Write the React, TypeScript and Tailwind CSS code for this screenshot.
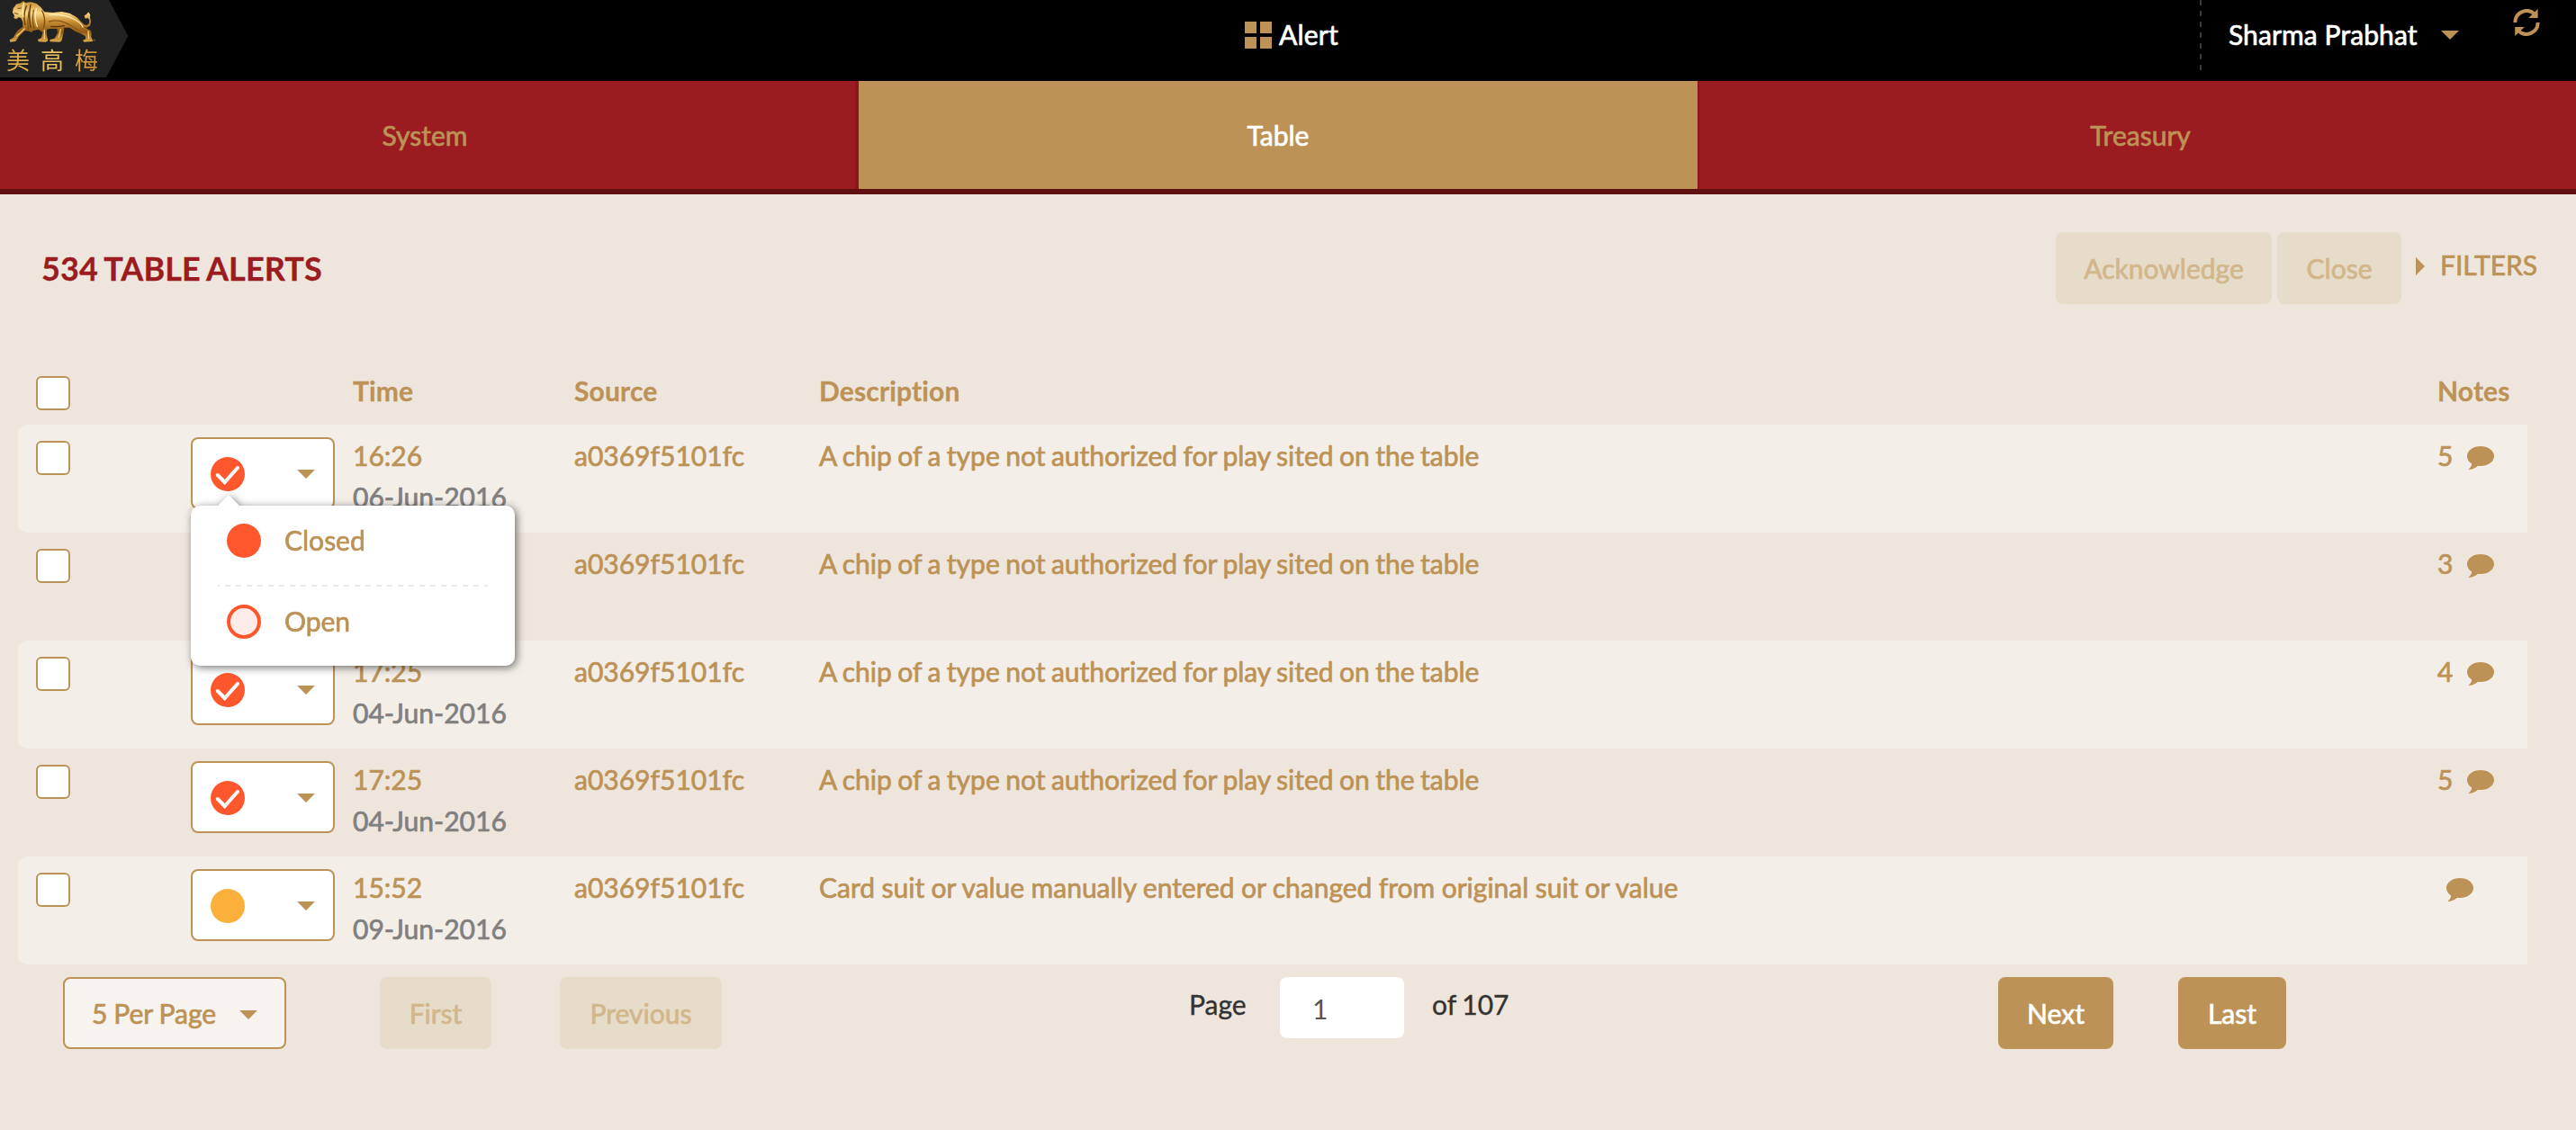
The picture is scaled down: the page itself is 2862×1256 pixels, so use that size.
import React from "react";

type Alert = {
  time: string;
  date: string;
  description: string;
  notes: string;
  status: "closed" | "pending";
};

const CHIP = "A chip of a type not authorized for play sited on the table";

const alerts: Alert[] = [
  { time: "16:26", date: "06-Jun-2016", description: CHIP, notes: "5", status: "closed" },
  { time: "17:25", date: "04-Jun-2016", description: CHIP, notes: "3", status: "closed" },
  { time: "17:25", date: "04-Jun-2016", description: CHIP, notes: "4", status: "closed" },
  { time: "17:25", date: "04-Jun-2016", description: CHIP, notes: "5", status: "closed" },
  {
    time: "15:52",
    date: "09-Jun-2016",
    description: "Card suit or value manually entered or changed from original suit or value",
    notes: "",
    status: "pending",
  },
];

const COLUMNS = "grid grid-cols-[192px_180px_246px_272px_1798px_100px]";

function Caret() {
  return (
    <svg className="h-[10px] w-5 shrink-0" viewBox="0 0 20 10" fill="#bc9256">
      <path d="M0 0H20L10 10Z" />
    </svg>
  );
}

function Bubble() {
  return (
    <svg className="mt-6 h-[26px] w-[30px] shrink-0" viewBox="0 0 30 26" fill="#bc9256">
      <path d="M15 0C23.3 0 30 4.9 30 11S23.3 22 15 22C14 22 13 21.9 12.1 21.8C9.6 24 6.4 25.6 2.6 26C2 26 1.7 25.4 2.2 24.9C3.7 23.5 4.9 21.9 5.2 19.4C2 17.4 0 14.4 0 11C0 4.9 6.7 0 15 0Z" />
    </svg>
  );
}

function Refresh() {
  return (
    <svg className="h-[30px] w-[30px]" viewBox="0 0 30 30">
      <path d="M2.4 15A12.8 12.8 0 0 1 24 5.6" fill="none" stroke="#bc9256" strokeWidth="4" />
      <path d="M27.6 0V10H17.2Z" fill="#bc9256" />
      <path d="M27.6 15A12.8 12.8 0 0 1 6 24.4" fill="none" stroke="#bc9256" strokeWidth="4" />
      <path d="M2.2 30V20H12.8Z" fill="#bc9256" />
    </svg>
  );
}

function Logo() {
  return (
    <div className="relative h-[86px] w-[143px]">
      <svg className="h-[86px] w-[143px]" viewBox="0 0 429 258">
        <defs>
          <linearGradient id="gold" x1="0" y1="0" x2="0" y2="1">
            <stop offset="0" stopColor="#c58a2c" />
            <stop offset="0.3" stopColor="#f8d686" />
            <stop offset="0.5" stopColor="#c98f35" />
            <stop offset="0.75" stopColor="#8f5a14" />
            <stop offset="1" stopColor="#e0ad4e" />
          </linearGradient>
        </defs>
        <path d="M0 0H363L427 120L354 258H0Z" fill="#222222" />
        <path
          fill="url(#gold)"
          d="M42 42L44 28L54 14L70 10L78 3L84 9L104 7L122 12L136 24L148 40L176 42L206 39L232 44L256 58L270 72L280 82L290 84L297 78L298 66L292 60L284 62L281 52L288 48L295 40L301 50L300 58L303 72L300 86L290 92L280 90L292 97L302 101L305 110L304 122L310 138L280 140L276 134L286 130L284 120L268 112L250 104L232 92L214 92L212 108L206 134L200 140L166 139L167 132L182 128L192 110L190 96L166 96L156 98L156 118L160 136L152 140L128 139L126 132L138 126L142 108L128 98L112 102L104 108L96 104L84 102L64 120L52 138L34 140L32 133L44 126L58 102L76 90L76 74L70 60L62 58L54 64L46 60L48 52Z"
        />
        <g fill="none" strokeLinecap="round">
          <path d="M88 20Q76 48 84 82M102 16Q94 50 102 92" stroke="#5a3508" strokeWidth="4" />
          <path d="M80 10Q72 34 78 56M122 28Q112 58 124 88" stroke="#fff0b8" strokeWidth="4" />
          <path d="M96 38Q90 70 94 98M60 28L70 27M112 34Q106 70 114 96M48 44L60 46" stroke="#70440c" strokeWidth="3" />
          <path d="M140 36Q154 60 146 92" stroke="#7c4c0d" strokeWidth="4" />
          <path d="M166 50Q206 46 238 60T276 90" stroke="#fff0b8" strokeWidth="4" />
          <path d="M164 72Q190 64 218 76T256 98" stroke="#8a5812" strokeWidth="4" />
          <path d="M170 88Q196 90 214 86" stroke="#5a3508" strokeWidth="4" />
          <path d="M56 120L82 96M148 100L148 128M202 98L196 124M294 104L296 128" stroke="#f8cf76" strokeWidth="4" />
        </g>
        <circle cx="314" cy="134" r="4" fill="#5f4a20" />
      </svg>
      <div className="absolute top-[52px] left-[7px] flex h-7 gap-3 bg-linear-to-r from-[#d9a441] via-[#f0c766] to-[#c98a30] bg-clip-text font-['Noto_Sans_CJK_TC',sans-serif] text-[26px] leading-7 font-normal text-transparent [-webkit-text-stroke:0]">
        <span>美</span>
        <span>高</span>
        <span>梅</span>
      </div>
    </div>
  );
}

function Checkbox() {
  return <div className="h-[38px] w-[38px] rounded-[6px] border-2 border-[#bc9256] bg-white" />;
}

function StatusDot({ status }: { status: Alert["status"] }) {
  if (status === "pending") return <div className="h-[38px] w-[38px] rounded-full bg-[#fbb03b]" />;
  return (
    <svg className="h-[38px] w-[38px]" viewBox="0 0 38 38">
      <circle cx="19" cy="19" r="19" fill="#ff572d" />
      <path
        d="M7.8 20L15.6 28L30 12"
        fill="none"
        stroke="#fff"
        strokeWidth="4"
        strokeLinecap="round"
        strokeLinejoin="miter"
      />
    </svg>
  );
}

function StatusMenu() {
  return (
    <div className="absolute top-[74px] left-[-2px] z-10 drop-shadow-[2px_2px_5px_rgba(0,0,0,0.55)]">
      <svg className="absolute -top-3 left-[30px] h-3 w-6" viewBox="0 0 24 12" fill="#fff">
        <path d="M0 12L12 0L24 12Z" />
      </svg>
      <div className="h-[178px] w-[360px] rounded-[10px] bg-white px-[30px]">
        <div className="flex h-[90px] gap-[26px] pt-5 pl-[10px]">
          <div className="h-[38px] w-[38px] rounded-full bg-[#ff572d]" />
          <span className="leading-[36px]">Closed</span>
        </div>
        <svg className="-mt-[2px] block h-[2px] w-[300px]" viewBox="0 0 300 2">
          <path d="M0 1H300" stroke="#e9e9e9" strokeWidth="2" strokeDasharray="6 6" strokeDashoffset="4" />
        </svg>
        <div className="flex gap-[26px] pt-5 pl-[10px]">
          <div className="h-[38px] w-[38px] rounded-full border-4 border-[#ff572d] bg-[#ffece8]" />
          <span className="leading-[36px]">Open</span>
        </div>
      </div>
    </div>
  );
}

function AlertRow({ alert, index }: { alert: Alert; index: number }) {
  return (
    <div
      className={`${COLUMNS} h-[120px] w-[2788px] rounded-l-[10px] ${index % 2 === 0 ? "bg-[#f3eee8]" : ""}`}
    >
      <div className="pt-[18px] pl-5">
        <Checkbox />
      </div>
      <div className="pt-[14px]">
        <div className="relative flex h-20 w-40 items-center justify-between rounded-lg border-2 border-[#bc9256] bg-white px-5 pt-[2px]">
          <StatusDot status={alert.status} />
          <Caret />
          {index === 0 && <StatusMenu />}
        </div>
      </div>
      <div className="pt-[11px] leading-[46px]">
        <div>{alert.time}</div>
        <div className="text-[#808080]">{alert.date}</div>
      </div>
      <div className="pt-[11px] leading-[46px]">a0369f5101fc</div>
      <div
        className={`pt-[11px] leading-[46px] ${alert.description === CHIP ? "[word-spacing:-1.2px]" : "[word-spacing:-0.3px]"}`}
      >
        {alert.description}
      </div>
      <div className="flex items-start gap-4">
        {alert.notes ? (
          <span className="pt-[11px] leading-[46px]">{alert.notes}</span>
        ) : (
          <span className="-mr-[6px] w-0" />
        )}
        <Bubble />
      </div>
    </div>
  );
}

export default function App() {
  return (
    <div className="h-[1256px] w-[2862px] overflow-hidden bg-[#eee6dc] font-['Lato',sans-serif] text-[30px] font-normal text-[#bc9256] [font-variant-ligatures:none] [-webkit-text-stroke:0.7px]">
      <header className="flex h-[90px] bg-black text-white">
        <Logo />
        <div className="ml-[1240px] flex h-[78px] items-center gap-2">
          <div className="grid h-[30px] w-[30px] grid-cols-2 gap-1">
            <div className="bg-[#bc9256]" />
            <div className="bg-[#bc9256]" />
            <div className="bg-[#bc9256]" />
            <div className="bg-[#bc9256]" />
          </div>
          <span className="pb-[2px] tracking-[0.2px]">Alert</span>
        </div>
        <div className="ml-auto flex w-[418px]">
          <svg className="h-[78px] w-[2px]" viewBox="0 0 2 78">
            <path d="M1 0V78" stroke="#3a3a3a" strokeWidth="2" strokeDasharray="6 6" />
          </svg>
          <span className="ml-[30px] w-[236px] leading-[76px] tracking-[0.1px]">Sharma Prabhat</span>
          <div className="pt-[34px]">
            <Caret />
          </div>
          <div className="ml-[60px] pt-[10px]">
            <Refresh />
          </div>
        </div>
      </header>
      <nav className="flex h-[126px] border-b-[6px] border-[#611012] bg-[#9b1c20] text-center leading-[120px]">
        <div className="w-[954px] border-r-4 border-[#8a181b] pr-[6px]">System</div>
        <div className="w-[932px] bg-[#bc9256] text-white">Table</div>
        <div className="flex-1 border-l-2 border-[#8a181b] pl-[6px]">Treasury</div>
      </nav>
      <section className="flex h-[184px] justify-between pt-[42px] pl-[46px]">
        <h1 className="text-[36px] leading-[80px] font-bold tracking-[0.1px] text-[#9b1c20] [-webkit-text-stroke:0.3px] [word-spacing:-1.5px]">
          534 TABLE ALERTS
        </h1>
        <div className="flex w-[578px] leading-[80px]">
          <div className="h-20 w-60 rounded-lg bg-[#e7dcc9] text-center text-[#d2b68c]">Acknowledge</div>
          <div className="ml-[6px] h-20 w-[138px] rounded-lg bg-[#e7dcc9] text-center text-[#d2b68c]">Close</div>
          <svg className="mt-[28px] ml-4 h-5 w-[10px]" viewBox="0 0 10 20" fill="#bc9256">
            <path d="M0 0L10 10L0 20Z" />
          </svg>
          <span className="ml-[17px] leading-[72px]">FILTERS</span>
        </div>
      </section>
      <main className="pl-5">
        <div className={`${COLUMNS} h-[72px] leading-[68px] font-bold tracking-[0.15px] [-webkit-text-stroke:0.3px]`}>
          <div className="pt-[18px] pl-5">
            <Checkbox />
          </div>
          <div />
          <div>Time</div>
          <div>Source</div>
          <div>Description</div>
          <div>Notes</div>
        </div>
        {alerts.map((alert, index) => (
          <AlertRow key={index} alert={alert} index={index} />
        ))}
      </main>
      <footer className="flex items-start pt-[14px] pl-[70px] leading-[80px]">
        <div className="flex h-20 w-[248px] items-center justify-between rounded-lg border-2 border-[#bc9256] bg-[#f7f3ee] px-[30px]">
          <span className="[word-spacing:-0.8px]">5 Per Page</span>
          <div className="pt-[3px] leading-none">
            <Caret />
          </div>
        </div>
        <div className="ml-[104px] h-20 w-[124px] rounded-lg bg-[#e7dcc9] text-center text-[#d2b68c]">First</div>
        <div className="ml-[76px] h-20 w-[180px] rounded-lg bg-[#e7dcc9] text-center text-[#d2b68c]">Previous</div>
        <span className="ml-[519px] w-[101px] leading-[60px] text-[#333] [-webkit-text-stroke:0.4px]">Page</span>
        <div className="h-[68px] w-[138px] rounded-lg bg-white pl-[36px] leading-[70px] text-[#555] [-webkit-text-stroke:0]">1</div>
        <span className="ml-[31px] w-[629px] leading-[60px] text-[#333] [-webkit-text-stroke:0.4px] [word-spacing:-1px]">of 107</span>
        <div className="h-20 w-32 rounded-lg bg-[#bc9256] text-center text-white">Next</div>
        <div className="ml-[72px] h-20 w-[120px] rounded-lg bg-[#bc9256] text-center text-white">Last</div>
      </footer>
    </div>
  );
}
